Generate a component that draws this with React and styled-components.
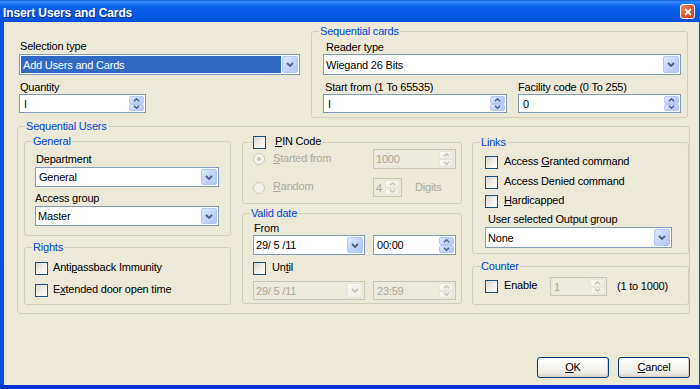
import React from 'react';
import styled, { createGlobalStyle } from 'styled-components';

const GlobalStyle = createGlobalStyle`
  html, body { margin: 0; padding: 0; background: #ffffff; }
  body { font-family: "Liberation Sans", Arial, sans-serif; font-size: 11px; letter-spacing: -0.2px; color: #000; }
  #root { width: 700px; height: 389px; }
  * { box-sizing: border-box; }
`;

const Window = styled.div`
  width: 700px;
  height: 389px;
  display: flex;
  flex-direction: column;
  overflow: hidden;
`;

const TitleBar = styled.div`
  height: 22px;
  flex-shrink: 0;
  display: flex;
  align-items: center;
  justify-content: space-between;
  padding: 3px 5px 0 3px;
  background: linear-gradient(to bottom, #0A5AE6 0px, #3D8EF8 2px, #1A72F2 4px, #0A5FE9 8px, #0658E4 16px, #0450DA 22px);
`;

const TitleText = styled.div`
  color: #ffffff;
  font-weight: bold;
  font-size: 12px;
  letter-spacing: -0.1px;
  text-shadow: 1px 1px 0 #0B2E8F;
  white-space: nowrap;
`;

const CloseButton = styled.div`
  width: 15px;
  height: 15px;
  margin-top: -2px;
  border: 1px solid #ffffff;
  border-radius: 3px;
  background: linear-gradient(135deg, #F0906E 0%, #E05A35 45%, #C8381A 100%);
  display: flex;
  align-items: center;
  justify-content: center;
`;

const Frame = styled.div`
  flex: 1;
  display: flex;
  padding: 0 4px 4px 4px;
  background: linear-gradient(to bottom, #0B50E2 0, #0A4EE0 calc(100% - 4px), #0530CC calc(100% - 4px));
`;

const Client = styled.div`
  flex: 1;
  display: flex;
  flex-direction: column;
  background: #ECE9D8;
  padding: 3px 9px 7px 0;
`;

const TopRow = styled.div`
  display: flex;
  align-items: flex-start;
  margin-left: 15px;
`;

const Column = styled.div`
  display: flex;
  flex-direction: column;
  flex-shrink: 0;
  width: ${p => (p.$w ? `${p.$w}px` : 'auto')};
  margin-top: ${p => p.$mt || 0}px;
  margin-left: ${p => p.$ml || 0}px;
`;

const Group = styled.fieldset`
  margin: ${p => p.$mt || 0}px 0 0 ${p => p.$ml || 0}px;
  padding: 0;
  min-width: 0;
  min-inline-size: 0;
  flex-shrink: 0;
  width: ${p => p.$w}px;
  height: ${p => p.$h}px;
  border: 1px solid #D0D0BF;
  border-radius: 3px;
`;

const Legend = styled.legend`
  margin-left: ${p => (p.$ml != null ? p.$ml : 7)}px;
  padding: 0 ${p => (p.$pr != null ? p.$pr : 1)}px 0 ${p => (p.$plain ? 0 : 1)}px;
  height: 13px;
  line-height: 13px;
  color: ${p => (p.$plain ? '#000' : '#0046D5')};
  white-space: nowrap;
`;

const GroupBody = styled.div`
  display: flex;
  flex-direction: column;
  padding: ${p => p.$pt || 0}px ${p => p.$pr || 0}px 0 ${p => p.$pl || 0}px;
`;

const ColumnsRow = styled.div`
  display: flex;
  align-items: flex-start;
  padding-left: ${p => p.$pl || 0}px;
  margin-top: ${p => p.$mt || 0}px;
`;

const Label = styled.div`
  height: 13px;
  line-height: 13px;
  white-space: nowrap;
  margin-top: ${p => p.$mt || 0}px;
  padding-left: ${p => p.$pl || 0}px;
  color: ${p => (p.$disabled ? '#ACA899' : '#000')};
`;

const Field = styled.div`
  display: flex;
  flex-shrink: 0;
  width: ${p => p.$w}px;
  height: ${p => p.$h || 21}px;
  margin-top: ${p => p.$mt || 0}px;
  margin-left: ${p => p.$ml || 0}px;
  border: 1px solid ${p => (p.$disabled ? '#C9C7BA' : '#7F9DB9')};
  background: ${p => (p.$disabled ? '#EBEADB' : '#FFFFFF')};
  padding: 1px;
`;

const FieldText = styled.div`
  flex: 1;
  min-width: 0;
  display: flex;
  align-items: center;
  margin-right: 1px;
  padding-left: ${p => (p.$pl != null ? p.$pl : 2)}px;
  white-space: nowrap;
  overflow: hidden;
  color: ${p => (p.$disabled ? '#ACA899' : p.$selected ? '#FFFFFF' : '#000')};
  background: ${p => (p.$selected ? '#316AC5' : 'transparent')};
`;

const DropButton = styled.div`
  width: 16px;
  flex-shrink: 0;
  display: flex;
  align-items: center;
  justify-content: center;
  border-radius: 2px;
  border: 1px solid ${p => (p.$disabled ? '#E6E4D8' : '#B4C8F6')};
  background: ${p =>
    p.$disabled
      ? 'linear-gradient(135deg, #F8F7F3 0%, #ECEAE0 100%)'
      : 'linear-gradient(135deg, #E0E9FE 0%, #C6D6FC 45%, #B2C7F6 100%)'};
`;

const SpinButtons = styled.div`
  width: 15px;
  flex-shrink: 0;
  display: flex;
  flex-direction: column;
`;

const SpinButton = styled.div`
  flex: 1;
  display: flex;
  align-items: center;
  justify-content: center;
  border-radius: 2px;
  border: 1px solid ${p => (p.$disabled ? '#E6E4D8' : '#B4C8F6')};
  background: ${p =>
    p.$disabled
      ? 'linear-gradient(135deg, #F8F7F3 0%, #ECEAE0 100%)'
      : 'linear-gradient(135deg, #E0E9FE 0%, #C6D6FC 45%, #B2C7F6 100%)'};
`;

const Row = styled.div`
  display: flex;
  align-items: center;
  height: ${p => p.$h || 13}px;
  margin-top: ${p => p.$mt || 0}px;
  margin-left: ${p => p.$ml || 0}px;
`;

const OptionArea = styled.div`
  display: flex;
  align-items: center;
  gap: ${p => (p.$gap != null ? p.$gap : 6)}px;
  width: ${p => (p.$w ? `${p.$w}px` : 'auto')};
  flex-shrink: 0;
  height: 13px;
`;

const CheckBox = styled.span`
  width: 13px;
  height: 13px;
  flex-shrink: 0;
  border: 1px solid #1C5180;
  background: linear-gradient(135deg, #D6D5CC 0%, #EDECE6 45%, #FFFFFF 100%);
`;

const Radio = styled.span`
  width: 12px;
  height: 12px;
  flex-shrink: 0;
  border-radius: 50%;
  border: 1px solid #CAC8BB;
  background: #F3F2EC;
  display: flex;
  align-items: center;
  justify-content: center;
  &::after {
    content: '';
    display: ${p => (p.$checked ? 'block' : 'none')};
    width: 4px;
    height: 4px;
    border-radius: 50%;
    background: #CAC8BB;
  }
`;

const OptionText = styled.span`
  line-height: 13px;
  padding-bottom: 2px;
  white-space: nowrap;
  color: ${p => (p.$disabled ? '#ACA899' : '#000')};
`;

const PlainText = styled.span`
  white-space: nowrap;
  margin-left: ${p => p.$ml || 0}px;
  padding-bottom: 1px;
  color: ${p => (p.$disabled ? '#ACA899' : '#000')};
`;

const ButtonRow = styled.div`
  margin-top: auto;
  display: flex;
  justify-content: flex-end;
  gap: 9px;
`;

const Button = styled.div`
  width: 72px;
  height: 21px;
  display: flex;
  align-items: center;
  justify-content: center;
  border: 1px solid #003C74;
  border-radius: 3px;
  background: linear-gradient(to bottom, #FFFFFF 0%, #F6F6F2 40%, #ECEBE5 80%, #D8D3C9 100%);
  box-shadow: inset -1px -1px 0 #D6D0C5;
  padding-bottom: 1px;
`;

const Chevron = ({ dir = 'down', disabled, small }) => {
  const color = disabled ? '#C9C7BA' : '#4D6185';
  const w = small ? 7 : 8;
  const h = small ? 4 : 5;
  const d = dir === 'down'
    ? (small ? 'M1 0.8 L3.5 3.2 L6 0.8' : 'M1 1 L4 4 L7 1')
    : (small ? 'M1 3.2 L3.5 0.8 L6 3.2' : 'M1 4 L4 1 L7 4');
  return (
    <svg width={w} height={h} viewBox={`0 0 ${w} ${h}`}>
      <path d={d} stroke={color} strokeWidth={small ? 1.5 : 1.8} fill="none" />
    </svg>
  );
};

const Combo = ({ w, h, mt, ml, value, selected, disabled, pl }) => (
  <Field $w={w} $h={h} $mt={mt} $ml={ml} $disabled={disabled}>
    <FieldText $selected={selected} $disabled={disabled} $pl={pl}>{value}</FieldText>
    <DropButton $disabled={disabled}>
      <Chevron dir="down" disabled={disabled} />
    </DropButton>
  </Field>
);

const Spin = ({ w, h = 20, mt, ml, value, disabled, pl = 3 }) => (
  <Field $w={w} $h={h} $mt={mt} $ml={ml} $disabled={disabled}>
    <FieldText $disabled={disabled} $pl={pl}>{value}</FieldText>
    <SpinButtons>
      <SpinButton $disabled={disabled}><Chevron dir="up" small disabled={disabled} /></SpinButton>
      <SpinButton $disabled={disabled}><Chevron dir="down" small disabled={disabled} /></SpinButton>
    </SpinButtons>
  </Field>
);

const Check = ({ children, w, gap }) => (
  <OptionArea $w={w} $gap={gap}>
    <CheckBox />
    <OptionText>{children}</OptionText>
  </OptionArea>
);

const RadioOption = ({ children, checked, w }) => (
  <OptionArea $w={w} $gap={8}>
    <Radio $checked={checked} />
    <OptionText $disabled>{children}</OptionText>
  </OptionArea>
);

export default function App() {
  return (
    <>
      <GlobalStyle />
      <Window>
        <TitleBar>
          <TitleText>Insert Users and Cards</TitleText>
          <CloseButton>
            <svg width="8" height="8" viewBox="0 0 8 8">
              <path d="M1 1 L7 7 M7 1 L1 7" stroke="#FFFFFF" strokeWidth="1.8" />
            </svg>
          </CloseButton>
        </TitleBar>
        <Frame>
          <Client>
            <TopRow>
              <Column $w={281} $mt={15}>
                <Label $pl={1}>Selection type</Label>
                <Combo w={281} mt={1} value="Add Users and Cards" selected />
                <Label $mt={6} $pl={1}>Quantity</Label>
                <Spin w={127} h={19} value="I" />
              </Column>
              <Group $w={377} $h={93} $ml={11}>
                <Legend>Sequential cards</Legend>
                <GroupBody $pl={11} $pt={3}>
                  <Label $pl={3}>Reader type</Label>
                  <Combo w={358} value="Wiegand 26 Bits" pl={1} />
                  <ColumnsRow $mt={6}>
                    <Column>
                      <Label $pl={2}>Start from (1 To 65535)</Label>
                      <Spin w={184} h={19} value="I" />
                    </Column>
                    <Column $ml={11}>
                      <Label $pl={0}>Facility code (0 To 255)</Label>
                      <Spin w={163} h={19} value="0" />
                    </Column>
                  </ColumnsRow>
                </GroupBody>
              </Group>
            </TopRow>

            <Group $w={673} $h={194} $ml={13} $mt={2}>
              <Legend>Sequential Users</Legend>
              <ColumnsRow $pl={6}>
                <Column $w={207}>
                  <Group $w={207} $h={101} $mt={2}>
                    <Legend>General</Legend>
                    <GroupBody $pl={10}>
                      <Label $mt={5} $pl={1}>Department</Label>
                      <Combo w={184} h={20} mt={1} value="General" />
                      <Label $mt={5}>Access group</Label>
                      <Combo w={184} h={20} mt={1} value="Master" pl={1} />
                    </GroupBody>
                  </Group>
                  <Group $w={207} $h={64} $mt={5}>
                    <Legend>Rights</Legend>
                    <GroupBody $pl={10}>
                      <Row $mt={8}>
                        <Check gap={5}>Anti<u>p</u>assback Immunity</Check>
                      </Row>
                      <Row $mt={9}>
                        <Check gap={5}>E<u>x</u>tended door open time</Check>
                      </Row>
                    </GroupBody>
                  </Group>
                </Column>

                <Column $w={220} $ml={11}>
                  <Group $w={220} $h={68} $mt={3}>
                    <Legend $plain $ml={10} $pr={2}>
                      <OptionArea $gap={9}>
                        <CheckBox />
                        <OptionText><u>P</u>IN Code</OptionText>
                      </OptionArea>
                    </Legend>
                    <GroupBody $pl={10}>
                      <Row $h={20}>
                        <RadioOption checked w={120}><u>S</u>tarted from</RadioOption>
                        <Spin w={83} value="1000" disabled pl={1} />
                      </Row>
                      <Row $h={19} $mt={9}>
                        <RadioOption w={120}><u>R</u>andom</RadioOption>
                        <Spin w={29} h={19} value="4" disabled pl={1} />
                        <PlainText $ml={13} $disabled>Digits</PlainText>
                      </Row>
                    </GroupBody>
                  </Group>
                  <Group $w={220} $h={97} $mt={3}>
                    <Legend>Valid date</Legend>
                    <GroupBody $pl={10}>
                      <Label $mt={2} $pl={1}>From</Label>
                      <Row $h={20}>
                        <Combo w={112} h={20} value="29/ 5 /11" pl={1} />
                        <Spin w={83} h={20} ml={8} value="00:00" pl={2} />
                      </Row>
                      <Row $mt={7}>
                        <Check gap={6}>Un<u>t</u>il</Check>
                      </Row>
                      <Row $h={19} $mt={6}>
                        <Combo w={112} h={19} value="29/ 5 /11" pl={1} disabled />
                        <Spin w={83} h={19} ml={8} value="23:59" pl={2} disabled />
                      </Row>
                    </GroupBody>
                  </Group>
                </Column>

                <Column $w={217} $ml={10}>
                  <Group $w={217} $h={118} $mt={3}>
                    <Legend>Links</Legend>
                    <GroupBody $pl={12}>
                      <Row $mt={7}>
                        <Check>Access <u>G</u>ranted command</Check>
                      </Row>
                      <Row $mt={7}>
                        <Check>Access Denied command</Check>
                      </Row>
                      <Row $mt={6}>
                        <Check><u>H</u>ardicapped</Check>
                      </Row>
                      <Label $mt={5} $pl={3}>User selected Output group</Label>
                      <Combo w={187} mt={1} value="None" pl={1} />
                    </GroupBody>
                  </Group>
                  <Group $w={217} $h={45} $mt={6}>
                    <Legend>Counter</Legend>
                    <GroupBody $pl={12}>
                      <Row $h={19} $mt={4}>
                        <Check w={65}>Enable</Check>
                        <Spin w={57} h={19} value="1" disabled pl={2} />
                        <PlainText $ml={10}>(1 to 1000)</PlainText>
                      </Row>
                    </GroupBody>
                  </Group>
                </Column>
              </ColumnsRow>
            </Group>

            <ButtonRow>
              <Button><span><u>O</u>K</span></Button>
              <Button><span><u>C</u>ancel</span></Button>
            </ButtonRow>
          </Client>
        </Frame>
      </Window>
    </>
  );
}
